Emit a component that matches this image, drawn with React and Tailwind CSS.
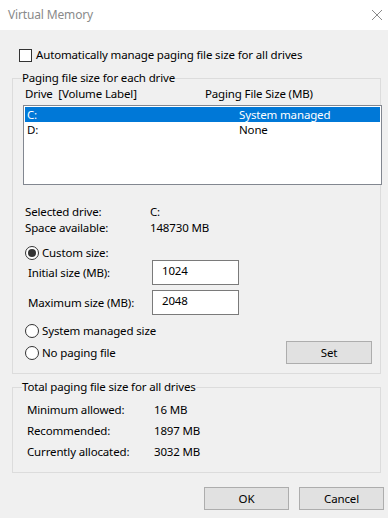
import React from "react";

const font = { fontFamily: '"Noto Sans", "Segoe UI", Arial, sans-serif' };

function Radio({ checked }) {
  return (
    <span className="w-[14px] h-[14px] rounded-full border border-[#333] bg-white flex items-center justify-center shrink-0">
      {checked && <span className="w-[8px] h-[8px] rounded-full bg-[#333]" />}
    </span>
  );
}

function Btn({ children, className = "" }) {
  return (
    <div
      className={
        "h-[23px] border border-[#adadad] bg-[#e1e1e1] flex items-center justify-center text-black shrink-0 " +
        className
      }
    >
      {children}
    </div>
  );
}

export default function App() {
  return (
    <div
      className="w-[388px] h-[518px] bg-[#f0f0f0] flex flex-col text-[11.5px] tracking-[-0.15px] text-black leading-[16px] overflow-hidden"
      style={font}
    >
      {/* Title bar */}
      <div className="h-[30px] bg-white flex items-center justify-between pl-[8px] pr-[4px] shrink-0">
        <span className="text-[12px] text-[#8a8a8a]">Virtual Memory</span>
        <svg width="12" height="12" viewBox="0 0 12 12" className="mr-[1px]">
          <path d="M1 1 L11 11 M11 1 L1 11" stroke="#8a8a8a" strokeWidth="1" />
        </svg>
      </div>

      {/* Checkbox row */}
      <div className="mt-[18px] ml-[19px] flex items-center h-[14px]">
        <span className="w-[13px] h-[13px] border border-[#333] bg-white shrink-0" />
        <span className="ml-[4px]">Automatically manage paging file size for all drives</span>
      </div>

      {/* Group 1 */}
      <fieldset className="mt-[8px] ml-[12px] w-[369px] min-w-0 border border-[#dcdcdc] px-[9px] pb-[9px]">
        <legend className="leading-[16px]">Paging file size for each drive</legend>
        <div className="flex h-[16px] ml-[3px]">
          <span className="w-[180px]">Drive&nbsp;&nbsp;[Volume Label]</span>
          <span>Paging File Size (MB)</span>
        </div>
        <div className="mt-[3px] ml-[1px] w-[359px] h-[80px] border border-[#828790] bg-white p-[1px]">
          <div className="flex h-[15px] items-center bg-[#0078d7] text-white">
            <span className="w-[214px] pl-[2px]">C:</span>
            <span>System managed</span>
          </div>
          <div className="flex h-[16px] items-center">
            <span className="w-[214px] pl-[2px]">D:</span>
            <span>None</span>
          </div>
        </div>

        <div className="mt-[19px] ml-[3px] flex h-[16px] items-center">
          <span className="w-[125px]">Selected drive:</span>
          <span>C:</span>
        </div>
        <div className="ml-[3px] flex h-[16px] items-center">
          <span className="w-[125px]">Space available:</span>
          <span>148730 MB</span>
        </div>

        <div className="mt-[10px] ml-[3px] flex items-center h-[14px]">
          <Radio checked />
          <span className="ml-[3px]">Custom size:</span>
        </div>
        <div className="ml-[6px] flex items-center h-[25px]">
          <span className="w-[124px]">Initial size (MB):</span>
          <div className="w-[87px] h-[25px] border border-[#7a7a7a] bg-white pl-[9px] pt-[2px]">1024</div>
        </div>
        <div className="mt-[5px] ml-[6px] flex items-center h-[25px]">
          <span className="w-[124px]">Maximum size (MB):</span>
          <div className="w-[87px] h-[25px] border border-[#7a7a7a] bg-white pl-[9px] pt-[2px]">2048</div>
        </div>

        <div className="mt-[8px] ml-[3px] flex items-center h-[16px]">
          <Radio />
          <span className="ml-[3px]">System managed size</span>
        </div>
        <div className="mt-[2px] ml-[3px] flex items-center justify-between h-[23px]">
          <div className="flex items-center">
            <Radio />
            <span className="ml-[3px]">No paging file</span>
          </div>
          <Btn className="w-[86px] mr-[-1px]">Set</Btn>
        </div>
      </fieldset>

      {/* Group 2 */}
      <fieldset className="mt-[5px] ml-[12px] w-[369px] min-w-0 border border-[#dcdcdc] px-[9px] pb-[10px]">
        <legend className="leading-[16px]">Total paging file size for all drives</legend>
        <div className="mt-[4px] ml-[5px] flex flex-col">
          <div className="flex items-center h-[21px]">
            <span className="w-[127px]">Minimum allowed:</span>
            <span>16 MB</span>
          </div>
          <div className="flex items-center h-[21px]">
            <span className="w-[127px]">Recommended:</span>
            <span>1897 MB</span>
          </div>
          <div className="flex items-center h-[21px]">
            <span className="w-[127px]">Currently allocated:</span>
            <span>3032 MB</span>
          </div>
        </div>
      </fieldset>

      {/* Buttons */}
      <div className="mt-[14px] flex justify-end gap-[10px] pr-[4px]">
        <Btn className="w-[85px]">OK</Btn>
        <Btn className="w-[85px]">Cancel</Btn>
      </div>
    </div>
  );
}
